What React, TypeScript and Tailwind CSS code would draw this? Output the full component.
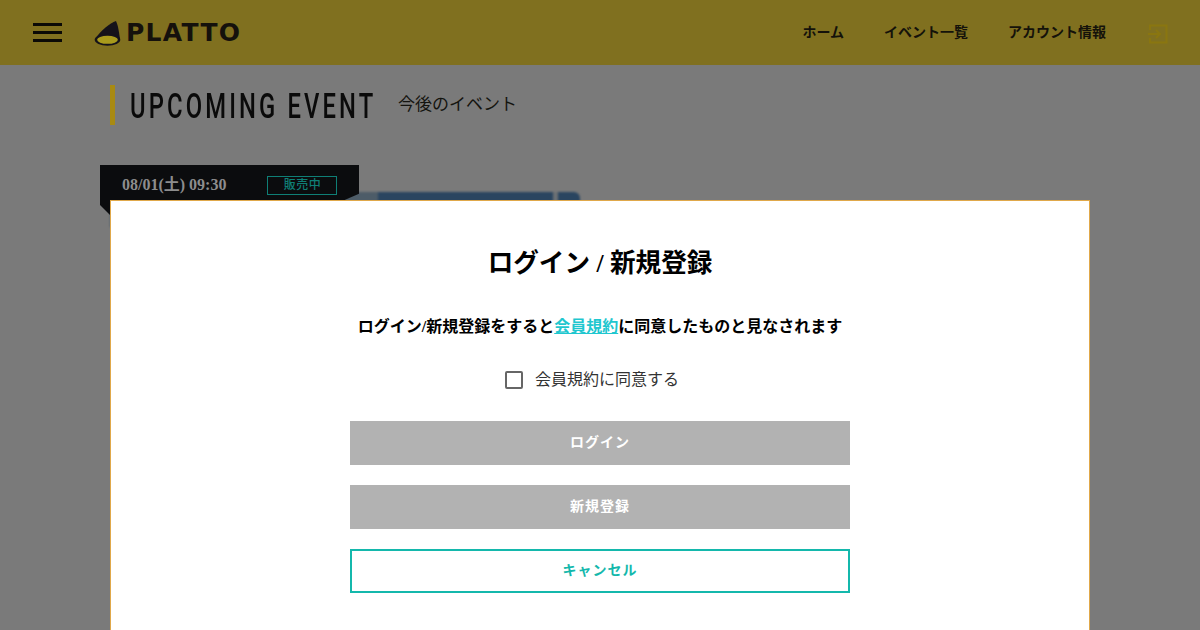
const serif = `"Liberation Serif", "Noto Sans CJK JP", serif`;

const Logo = () => (
  <div className="flex items-center">
    <svg width="27" height="27" viewBox="0 0 27 27" className="mr-[5px] mt-[1px]">
      <path d="M22 1 C16 3 6 11 1.5 18.5 L26 19 C25 12 24 5 22 1 Z" fill="#15131a" />
      <ellipse cx="13.5" cy="19.8" rx="12.8" ry="6" fill="#15131a" />
      <ellipse cx="13.5" cy="19.8" rx="10.4" ry="4" fill="#a89a1c" />
    </svg>
    <span className="text-[25px] leading-none font-bold tracking-[1.3px] text-[#15110c] font-['DejaVu_Sans']">
      PLATTO
    </span>
  </div>
);

const NavLink = ({ label }: { label: string }) => (
  <a className="text-sm font-bold text-[#14120a] whitespace-nowrap">{label}</a>
);

const Header = () => (
  <header className="h-[65px] bg-[#80701f] flex items-center pl-[33px] pr-[32px]">
    <div className="flex flex-col gap-[5px] w-[29px] mr-[32px] -mt-[1px]">
      <span className="h-[3px] bg-[#0b0a06]" />
      <span className="h-[3px] bg-[#0b0a06]" />
      <span className="h-[3px] bg-[#0b0a06]" />
    </div>
    <Logo />
    <nav className="ml-auto flex items-center gap-10">
      <NavLink label="ホーム" />
      <NavLink label="イベント一覧" />
      <NavLink label="アカウント情報" />
      <svg width="20" height="20" viewBox="0 0 20 20" fill="none" stroke="#8a7610" strokeWidth="2" className="ml-[2px] mt-[2px]">
        <path d="M2 6 V1.5 H18.5 V18.5 H2 V14" />
        <path d="M0 10 H12 M8 6 L12 10 L8 14" />
      </svg>
    </nav>
  </header>
);

const ModalButton = ({ label, outline }: { label: string; outline?: boolean }) => (
  <button
    className={
      outline
        ? "w-[500px] h-11 border-2 border-[#14b8ac] bg-white text-[#14b8ac] text-sm font-bold tracking-[1px]"
        : "w-[500px] h-11 bg-[#b2b2b2] text-white text-sm font-bold tracking-[1px]"
    }
  >
    {label}
  </button>
);

const Modal = () => (
  <div className="absolute left-[110px] top-[200px] w-[980px] h-[480px] bg-white border border-[#e0a84a] flex flex-col items-center pt-[43px]">
    <h2 className="text-[25.6px] leading-[40px] font-bold text-black">ログイン / 新規登録</h2>
    <p className="mt-[31px] text-base leading-6 font-bold text-black">
      ログイン/新規登録をすると
      <a className="text-[#1fc7cf] underline">会員規約</a>
      に同意したものと見なされます
    </p>
    <label className="mt-[29px] -ml-4 flex items-center h-6 text-[#333]">
      <span className="w-[18px] h-[18px] border-2 border-[#666] rounded-[2px] mr-3" />
      <span className="text-base">会員規約に同意する</span>
    </label>
    <div className="mt-[29px] flex flex-col gap-5">
      <ModalButton label="ログイン" />
      <ModalButton label="新規登録" />
      <ModalButton label="キャンセル" outline />
    </div>
  </div>
);

export default function App() {
  return (
    <div className="relative h-[630px] w-[1200px] overflow-hidden bg-[#7a7a7a]" style={{ fontFamily: serif }}>
      <Header />
      <div className="ml-[110px] mt-5 flex items-center h-10">
        <div className="w-[5px] h-10 bg-[#a88a12]" />
        <div className="ml-[15px] w-[267px] mt-[2px]">
          <h1 className="origin-left scale-x-[0.68] text-[35px] leading-none font-medium text-[#0a0a0a] tracking-[4.6px] font-['Roboto',sans-serif] whitespace-nowrap">
            UPCOMING EVENT
          </h1>
        </div>
        <span className="ml-[1px] text-[17px] text-[#14140f]">今後のイベント</span>
      </div>
      <div className="relative ml-[100px] mt-10 w-[480px] h-[60px]">
        <div className="absolute left-[10px] right-0 top-[27px] h-[35px] rounded-tr-md overflow-hidden flex blur-[1px]">
          <div className="w-[268px] bg-[#4d5c68]" />
          <div className="flex-1 bg-[#2a4560]" />
          <div className="w-[5px] bg-[#6b7074]" />
          <div className="w-[22px] bg-[#2a4560]" />
        </div>
        <div className="absolute left-0 top-0 w-[259px] h-[40px] bg-[#0b0c0e] flex items-center pl-[22px] [clip-path:polygon(0_0,100%_0,100%_72%,90%_100%,0_100%)]">
          <span className="text-base font-bold text-[#8d8d8d] whitespace-nowrap">08/01(土) 09:30</span>
          <span className="ml-[41px] w-[70px] h-[19px] border border-[#0f7f76] text-[#0f7f76] text-xs font-medium text-center leading-[17px] tracking-[0.5px]">
            販売中
          </span>
        </div>
        <div className="absolute left-0 top-[40px] w-0 h-0 border-t-[10px] border-t-[#0b0c0e] border-l-[10px] border-l-transparent" />
      </div>
      <Modal />
    </div>
  );
}
